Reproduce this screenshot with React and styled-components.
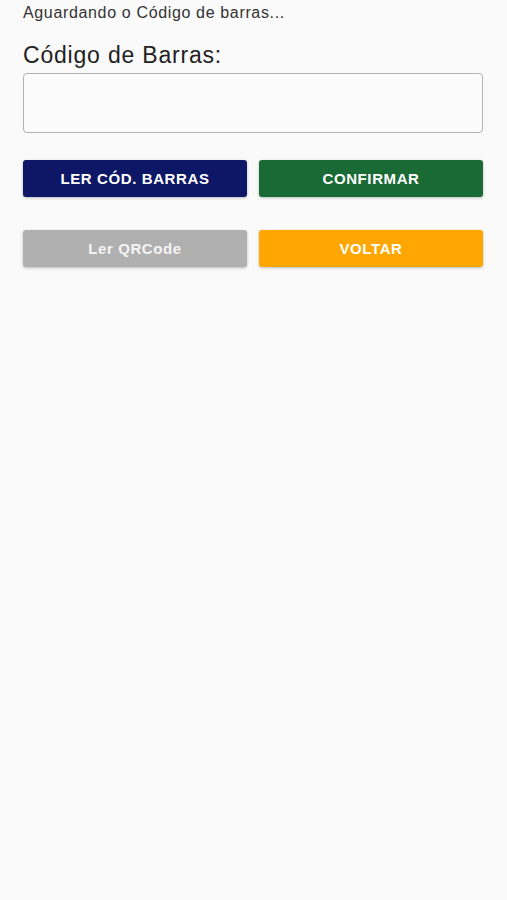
import styled, { createGlobalStyle } from "styled-components";

const GlobalStyle = createGlobalStyle`
  html, body {
    margin: 0;
    padding: 0;
    background: #fafafa;
    font-family: "Liberation Sans", Arial, sans-serif;
  }
`;

const Screen = styled.div`
  min-height: 900px;
  padding: 0 24px 0 23px;
  box-sizing: border-box;
  background: #fafafa;
`;

const Status = styled.div`
  padding-top: 3px;
  font-size: 16px;
  color: #333;
  line-height: 20px;
  letter-spacing: 0.65px;
`;

const Label = styled.div`
  margin-top: 18px;
  font-size: 23px;
  color: #222;
  line-height: 28px;
  letter-spacing: 0.8px;
`;

const Input = styled.div`
  margin-top: 4px;
  height: 60px;
  box-sizing: border-box;
  border: 1.5px solid #b3b3b3;
  border-radius: 4px;
  background: #fbfbfb;
`;

const ButtonRow = styled.div`
  display: grid;
  grid-template-columns: 1fr 1fr;
  column-gap: 12px;
  margin-top: ${(p) => p.$top}px;
`;

const Button = styled.div`
  height: 37px;
  display: flex;
  align-items: center;
  justify-content: center;
  border-radius: 3px;
  background: ${(p) => p.$bg};
  color: ${(p) => p.$fg || "#fff"};
  font-size: 15px;
  font-weight: 700;
  letter-spacing: 0.6px;
  box-shadow: 0 1px 3px rgba(0, 0, 0, 0.25);
`;

export default function App() {
  return (
    <>
      <GlobalStyle />
      <Screen>
        <Status>Aguardando o Código de barras...</Status>
        <Label>Código de Barras:</Label>
        <Input />
        <ButtonRow $top={27}>
          <Button $bg="#0e1666">LER CÓD. BARRAS</Button>
          <Button $bg="#1a6a35">CONFIRMAR</Button>
        </ButtonRow>
        <ButtonRow $top={33}>
          <Button $bg="#b0b0b0" $fg="#f4f4f4">Ler QRCode</Button>
          <Button $bg="#ffa600">VOLTAR</Button>
        </ButtonRow>
      </Screen>
    </>
  );
}
